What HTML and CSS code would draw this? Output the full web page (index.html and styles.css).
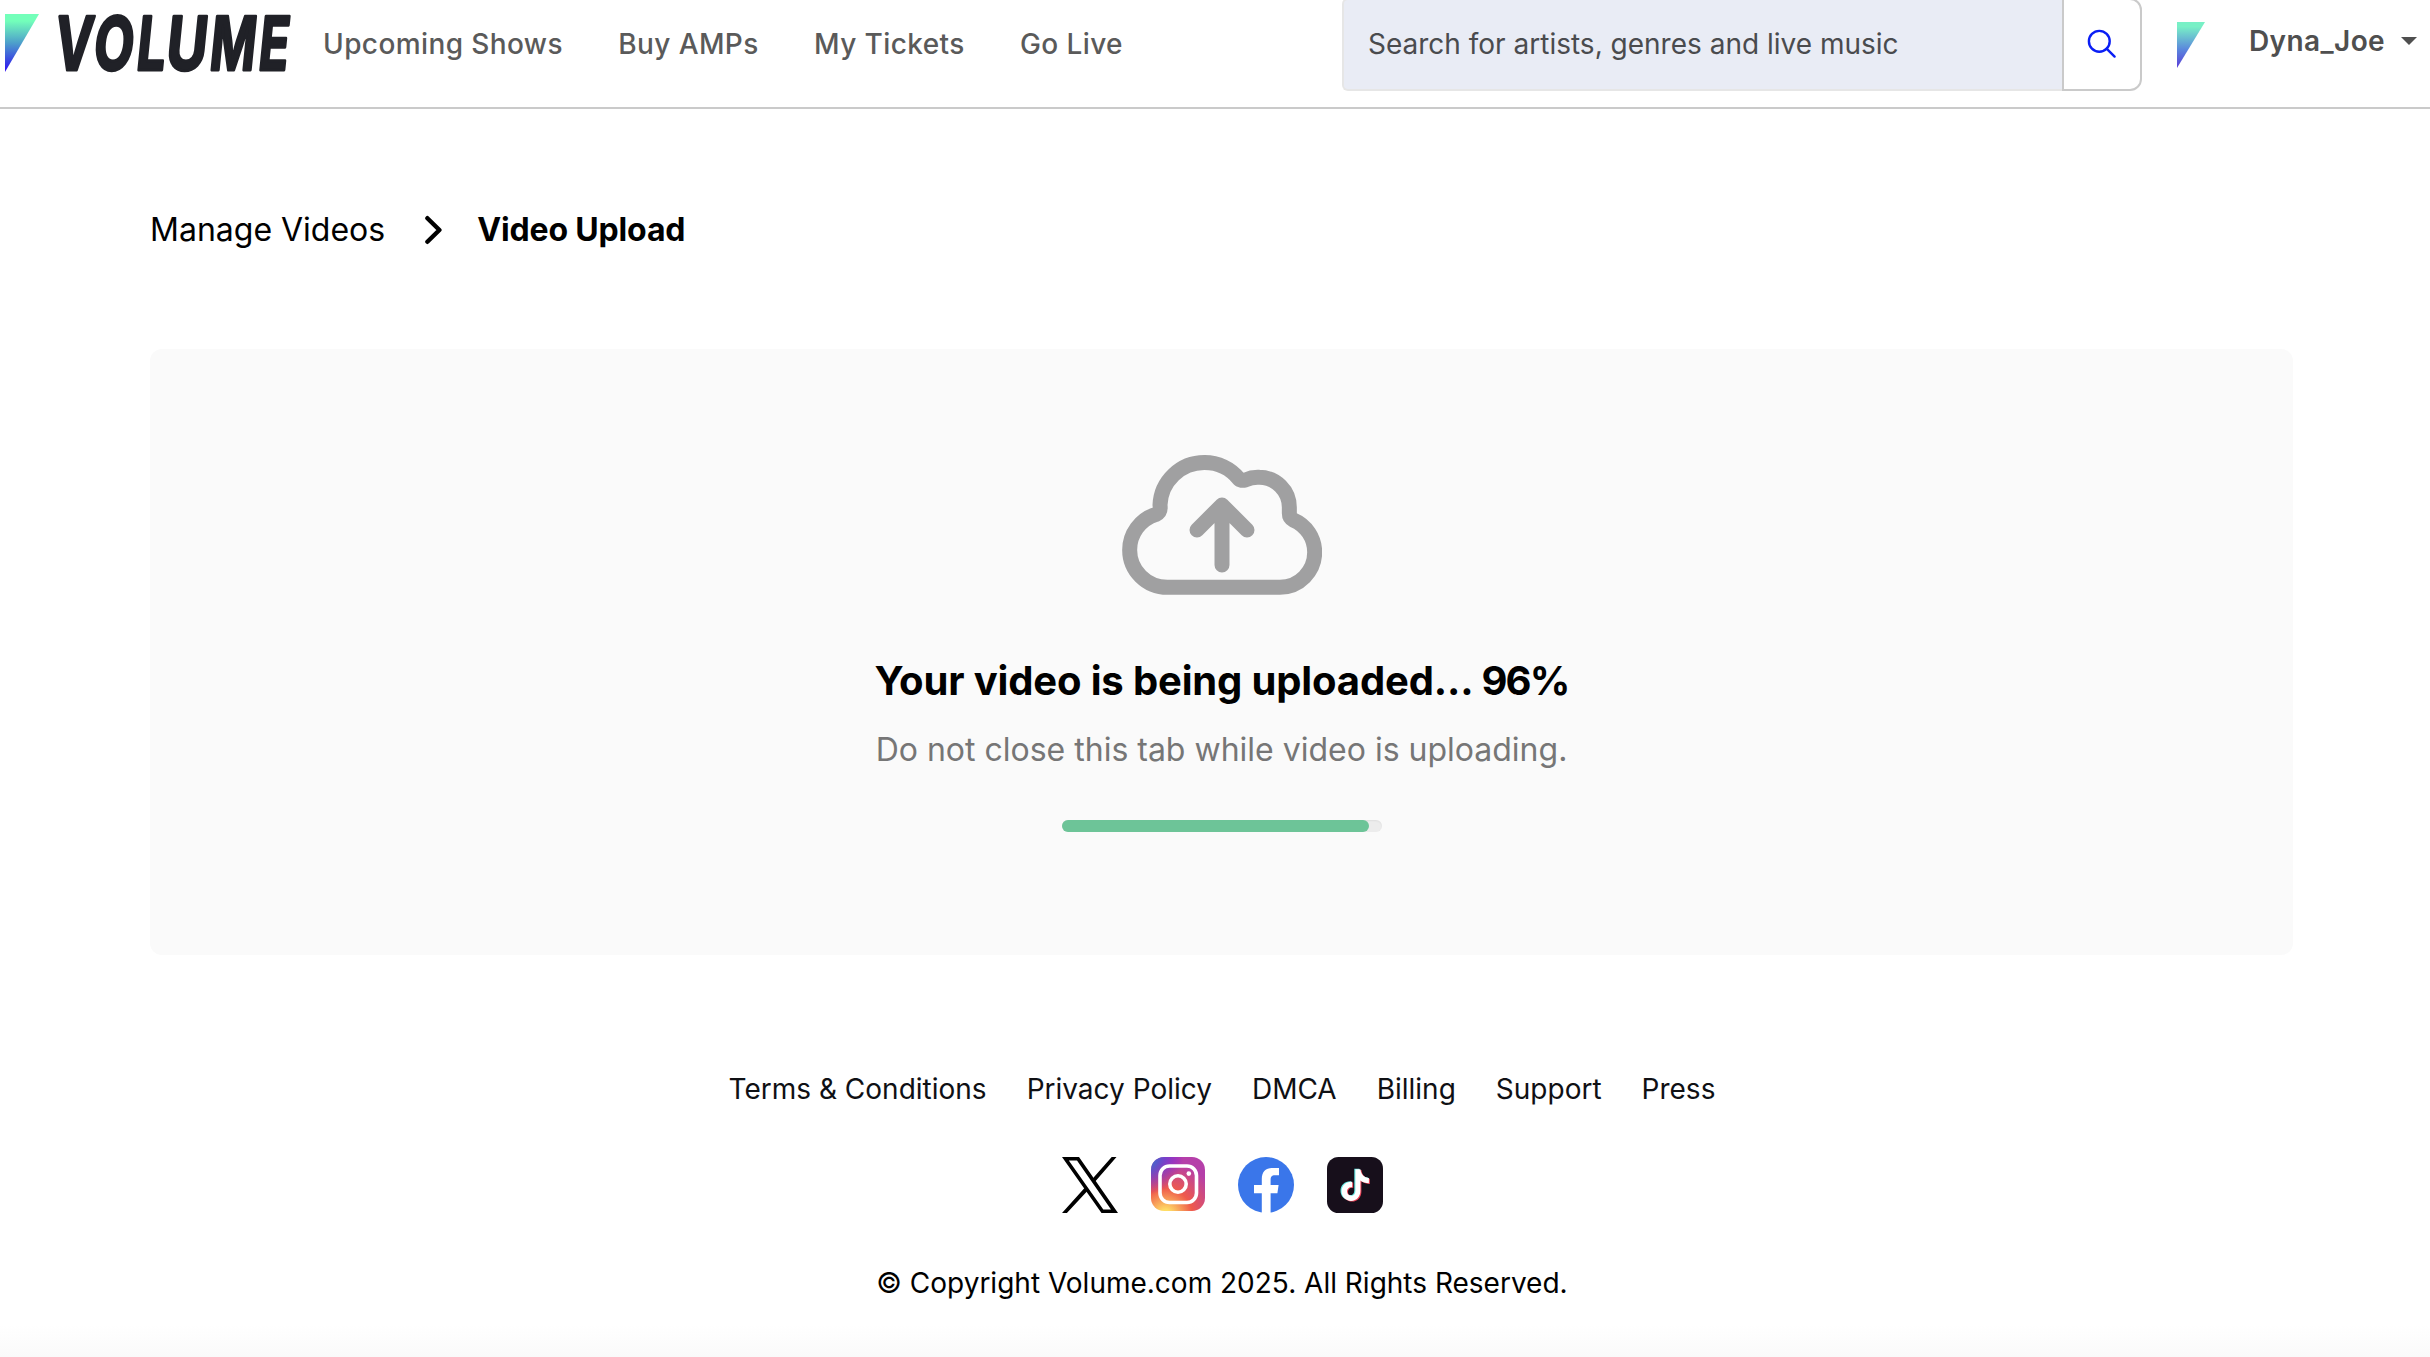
FILE: index.html
```html
<!DOCTYPE html>
<html lang="en">
<head>
  <meta charset="UTF-8" />
  <meta name="viewport" content="width=device-width, initial-scale=1.0"/>
  <title>Volume.com | Video Upload</title>

  <!-- Styles -->
  <link rel="stylesheet" href="styles.css">
</head>
<body>
  <!-- Header -->
  <header class="header">
    <a class="logo" href="#" aria-label="Volume">
      <svg width="287" height="58" viewBox="0 0 287 58">
        <defs>
          <linearGradient id="brand" x1="0" y1="0" x2="0" y2="1">
            <stop offset="0.12" stop-color="#73ffba"/>
            <stop offset="0.5" stop-color="#4d9fcb"/>
            <stop offset="1" stop-color="#2b0bf2"/>
          </linearGradient>
        </defs>
        <path d="M0 0H34L0 58Z" fill="url(#brand)"/>
        <g class="wordmark" transform="translate(0 55.700) skewX(-5.700)">
          <text x="47.800" textLength="38" lengthAdjust="spacingAndGlyphs">V</text>
          <text x="87" textLength="39.800" lengthAdjust="spacingAndGlyphs">O</text>
          <text x="130" textLength="29" lengthAdjust="spacingAndGlyphs">L</text>
          <text x="159.500" textLength="40.700" lengthAdjust="spacingAndGlyphs">U</text>
          <text x="203.300" textLength="45.700" lengthAdjust="spacingAndGlyphs">M</text>
          <text x="252" textLength="30" lengthAdjust="spacingAndGlyphs">E</text>
        </g>
      </svg>
    </a>
    <nav class="nav">
      <a href="#">Upcoming Shows</a>
      <a href="#">Buy AMPs</a>
      <a href="#">My Tickets</a>
      <a href="#">Go Live</a>
    </nav>
    <form class="search">
      <input type="text" placeholder="Search for artists, genres and live music">
      <button type="button" aria-label="Search">
        <svg width="30" height="30" viewBox="0 0 30 30" fill="none" stroke="#0a1ef5" stroke-width="2.4" stroke-linecap="round">
          <circle cx="12.3" cy="12.3" r="10.4"/>
          <path d="M19.6 19.6L27.6 27.6"/>
        </svg>
      </button>
    </form>
    <svg class="avatar" width="28" height="46" viewBox="0 0 28 46">
      <defs>
        <linearGradient id="avatarFill" x1="0" y1="0" x2="0" y2="1">
          <stop offset="0.1" stop-color="#78f0c6"/>
          <stop offset="0.6" stop-color="#5a86dd"/>
          <stop offset="1" stop-color="#5a3cd8"/>
        </linearGradient>
      </defs>
      <path d="M0 0H28L0 46Z" fill="url(#avatarFill)"/>
    </svg>
    <a class="user" href="#">Dyna_Joe</a>
  </header>

  <main class="container">
    <!-- Breadcrumb -->
    <div class="breadcrumb">
      <a href="#">Manage Videos</a>
      <svg width="18" height="30" viewBox="0 0 18 30" fill="none" stroke="#000" stroke-width="4.4" stroke-linecap="round" stroke-linejoin="round">
        <path d="M2.4 3.2L14.4 15L2.4 26.8"/>
      </svg>
      <strong>Video Upload</strong>
    </div>

    <!-- Upload status -->
    <section class="upload">
      <svg class="cloud" width="200" height="140" viewBox="126 75 600 420" fill="none" stroke="#a0a0a1" stroke-width="45" stroke-linecap="round" stroke-linejoin="round">
        <path d="M262 472A113 112 0 0 1 149 360A113 112 0 0 1 228 253Q243 246 240 225A133 133 0 0 1 373 97.500A133 133 0 0 1 477 147Q484 153 496 150A90 90 0 0 1 538 142A90 90 0 0 1 628 232V250Q628 264 640 270A105 105 0 0 1 704 367A105 105 0 0 1 600 472Z"/>
        <path d="M426 405V225M351 300L426 225L501 300"/>
      </svg>
      <h1>Your video is being uploaded... <span class="percent">96%</span></h1>
      <p>Do not close this tab while video is uploading.</p>
      <div class="progress">
        <div class="progress-bar" style="width: 96%"></div>
      </div>
    </section>
  </main>

  <!-- Footer -->
  <footer class="footer">
    <div class="footer-links">
      <a href="#">Terms &amp; Conditions</a>
      <a href="#">Privacy Policy</a>
      <a href="#">DMCA</a>
      <a href="#">Billing</a>
      <a href="#">Support</a>
      <a href="#">Press</a>
    </div>
    <div class="social">
      <!-- X -->
      <svg class="x" width="56" height="56" viewBox="0 0 56 56">
        <path d="M0 0H17L56 56H39.500Z M6.800 3.600L41.300 52.400H49L15 3.600Z" fill="#000" fill-rule="evenodd"/>
        <path d="M25.800 33.600L4.900 56H0L23.200 30.300Z M30.500 21.800L49.700 0H54.500L33 24.800Z" fill="#000"/>
      </svg>
      <!-- Instagram -->
      <svg class="instagram" width="54" height="54" viewBox="0 0 54 54">
        <defs>
          <radialGradient id="igWarm" cx="0.27" cy="1.08" r="1">
            <stop offset="0" stop-color="#fd5"/>
            <stop offset="0.1" stop-color="#fd6"/>
            <stop offset="0.5" stop-color="#ef5a4b"/>
            <stop offset="1" stop-color="#b53fa9"/>
          </radialGradient>
          <radialGradient id="igCool" cx="-0.1" cy="0" r="0.7">
            <stop offset="0" stop-color="#3771c8"/>
            <stop offset="0.2" stop-color="#3f6ec8"/>
            <stop offset="1" stop-color="#60f" stop-opacity="0"/>
          </radialGradient>
        </defs>
        <rect width="54" height="54" rx="13" fill="url(#igWarm)"/>
        <rect width="54" height="54" rx="13" fill="url(#igCool)"/>
        <g fill="none" stroke="#fff" stroke-width="3.600">
          <rect x="9" y="9" width="36.500" height="36.500" rx="9.500"/>
          <circle cx="27" cy="27" r="8.200"/>
        </g>
        <circle cx="37.800" cy="16.600" r="2.300" fill="#fff"/>
      </svg>
      <!-- Facebook -->
      <svg class="facebook" width="56" height="56" viewBox="0 0 56 56">
        <circle cx="28" cy="28" r="28" fill="#3a76ea"/>
        <path d="M23.800 56V36.200H16V28H23.800V22C23.800 14.400 28 11 34.600 11H41V18.200H37C33.500 18.200 32.600 20 32.600 22.800V28H40.600L39.400 36.200H32.600V56A28 28 0 0 1 23.800 56Z" fill="#fff"/>
      </svg>
      <!-- TikTok -->
      <svg class="tiktok" width="56" height="56" viewBox="0 0 56 56">
        <defs>
          <path id="note" d="M28.300 12H33.300C33.900 17 37.200 20.400 41.800 20.800V26C38.700 26 35.700 25 33.300 23.300V33.500C33.300 39.500 29.400 43.600 24 43.600C18.600 43.600 14.500 39.400 14.500 34C14.500 28.200 19 24.100 25.100 24.500V30C22.200 29.300 19.900 31.200 19.900 34C19.900 36.500 21.700 38.400 24.100 38.400C26.700 38.400 28.300 36.700 28.300 33.700Z"/>
        </defs>
        <rect width="56" height="56" rx="11.500" fill="#170f1b"/>
        <use href="#note" x="-1" y="-0.300" fill="#66e8e4"/>
        <use href="#note" x="1.100" y="1" fill="#ee4358"/>
        <use href="#note" x="0.100" y="0.300" fill="#fff"/>
      </svg>
    </div>
    <p class="copyright">© Copyright Volume.com 2025. All Rights Reserved.</p>
  </footer>
</body>
</html>
```

FILE: styles.css
```css
:root {
  --text-color: #000;
  --nav-color: #5a5a5a;
  --border-color: #cacaca;
  --panel-color: #fafafa;
  --green: #6dc498;
  --font-sans: Inter, Arial, sans-serif;
}

* {
  box-sizing: border-box;
}

body {
  font-family: var(--font-sans);
  font-size: 28px;
  line-height: 34px;
  color: var(--text-color);
  background-color: #fff;
  min-height: 1357px;
  margin: 0;
}

a {
  color: inherit;
  text-decoration: none;
}

svg {
  display: block;
  flex-shrink: 0;
}

/* Header */
.header {
  display: flex;
  align-items: flex-start;
  height: 109px;
  border-bottom: 2px solid var(--border-color);
  white-space: nowrap;
}

.logo {
  padding: 14px 0 0 5px;
}

.logo svg {
  overflow: visible;
}

.wordmark {
  font-family: Inter, Arial, sans-serif;
  font-size: 74px;
  font-weight: 700;
  fill: #202127;
  stroke: #202127;
  stroke-width: 3px;
  stroke-linejoin: round;
}

.nav {
  display: flex;
  gap: 55.3px;
  padding: 27px 0 0 31px;
  color: var(--nav-color);
  font-weight: 500;
  letter-spacing: 0.4px;
}

.search {
  display: flex;
  width: 800px;
  height: 93px;
  margin: -2px 35px 0 auto;
}

.search input {
  flex: 1;
  min-width: 0;
  padding: 0 24px 2px;
  border: 2px solid #e6e6e6;
  border-right: 0;
  border-radius: 6px 0 0 6px;
  background-color: #e9ecf5;
  font: inherit;
}

.search input::placeholder {
  color: #4a4b4e;
  opacity: 1;
}

.search button {
  display: flex;
  align-items: center;
  justify-content: center;
  width: 80px;
  padding: 0 0 2px;
  border: 2px solid var(--border-color);
  border-radius: 0 12px 12px 0;
  background-color: #fff;
}

.avatar {
  margin-top: 22px;
}

.user {
  display: flex;
  align-items: center;
  justify-content: space-between;
  width: 168px;
  margin: 24px 13px 0 44px;
  color: #4f4f4f;
  font-weight: 600;
  letter-spacing: 0.4px;
}

.user::after {
  content: "";
  border: 8px solid transparent;
  border-top-color: #4f4f4f;
  border-bottom: 0;
}

/* Page content */
.container {
  width: 2143px;
  margin-left: 150px;
}

.breadcrumb {
  display: flex;
  align-items: center;
  height: 240px;
  padding-top: 1px;
  font-size: 32px;
}

.breadcrumb svg {
  margin: 0 34px 0 40px;
}

.breadcrumb strong {
  font-weight: 700;
  letter-spacing: -0.15px;
}

.upload {
  display: flex;
  flex-direction: column;
  align-items: center;
  height: 606px;
  padding-top: 106px;
  border-radius: 12px;
  background-color: var(--panel-color);
}

.upload h1 {
  margin: 62px 0 0;
  font-size: 40px;
  font-weight: 700;
  letter-spacing: -0.15px;
  line-height: 48px;
}

.upload .percent {
  letter-spacing: -1.8px;
}

.upload p {
  margin: 25px 0 0;
  color: #767676;
  font-size: 32px;
  line-height: 40px;
}

.progress {
  width: 320px;
  height: 12px;
  margin-top: 50px;
  border-radius: 6px;
  background-color: #ececec;
  box-shadow: inset 0 1px 2px rgba(0, 0, 0, 0.06);
}

.progress-bar {
  height: 100%;
  border-radius: 6px;
  background-color: var(--green);
}

/* Footer */
.footer {
  display: flex;
  flex-direction: column;
  align-items: center;
  height: 402px;
  padding: 117px 136px 0 150px;
  background: linear-gradient(#fff 370px, #fafafa);
}

.footer-links {
  display: flex;
  gap: 40px;
  color: #0f1014;
  white-space: nowrap;
}

.social {
  display: flex;
  gap: 33px;
  width: 320px;
  margin-top: 51px;
}

.copyright {
  margin: 53px 0 0;
}
```
